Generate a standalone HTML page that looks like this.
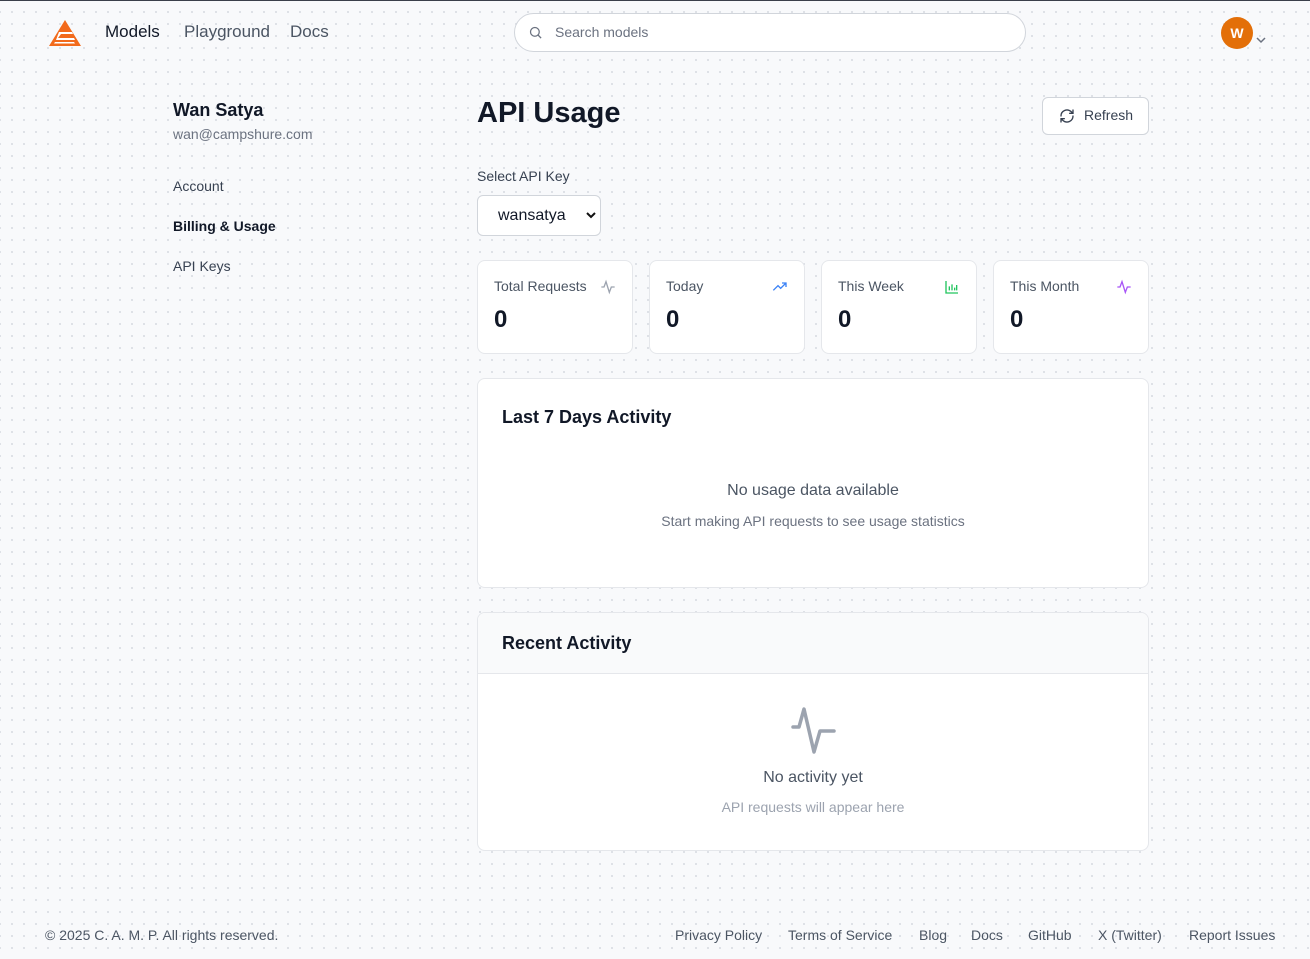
<!DOCTYPE html>
<html><head><meta charset="utf-8"><style>
*{box-sizing:border-box;margin:0;padding:0}
body{width:1310px;height:959px;overflow:hidden;font-family:"Liberation Sans",sans-serif;color:#111827;
background-color:#f8f9fb;background-image:radial-gradient(circle,#dcdfe5 1px,transparent 1.2px);background-size:12px 12px;background-position:6px 6px;position:relative}
.abs{position:absolute}
.nav a{position:absolute;top:22px;font-size:17px;color:#4b5563;text-decoration:none}
.search{left:514px;top:13px;width:512px;height:39px;border:1px solid #d1d5db;border-radius:20px;background:#fff}
.search span{position:absolute;left:40px;top:10px;font-size:14px;color:#6b7280}
.card{background:#fff;border:1px solid #e5e7eb;border-radius:8px;position:absolute}
.stat .l{position:absolute;left:16px;top:17px;font-size:14px;color:#4b5563}
.stat .v{position:absolute;left:16px;top:45px;font-size:24px;font-weight:bold;color:#111827}
.stat svg{position:absolute;right:16px;top:18px}
.side{position:absolute;left:173px;font-size:14px;color:#374151}
.foot{position:absolute;top:927px;font-size:14px;color:#4b5563}
</style></head><body>
<div class="abs" style="left:0;top:0;width:1310px;height:1px;background:#3a3f4a"></div>
<svg class="abs" style="left:47px;top:19px" width="36" height="28" viewBox="0 0 36 28"><path d="M18 1 L34 27 H2 Z" fill="#f26a1b"/><path d="M12 13 H25 L26 15 H14 L11 19 H27 L28 21 H9 Z" fill="#fff"/><path d="M8 23 H27 L28 24.5 H7 Z" fill="#fff"/></svg>
<div class="nav"><a style="left:105px;color:#111827">Models</a><a style="left:184px">Playground</a><a style="left:290px">Docs</a></div>
<div class="abs search"><svg style="position:absolute;left:13px;top:11px" width="15" height="15" viewBox="0 0 24 24" fill="none" stroke="#6b7280" stroke-width="2"><circle cx="11" cy="11" r="7"/><path d="M21 21l-5-5"/></svg><span>Search models</span></div>
<div class="abs" style="left:1221px;top:17px;width:32px;height:32px;border-radius:50%;background:#e36f08;color:#fff;font-size:14px;font-weight:bold;text-align:center;line-height:32px">W</div>
<svg class="abs" style="left:1256px;top:36px" width="10" height="8" viewBox="0 0 10 8"><path d="M1 2l4 4 4-4" fill="none" stroke="#6b7280" stroke-width="1.5"/></svg>

<div class="side" style="top:100px;font-size:18px;font-weight:bold;color:#111827">Wan Satya</div>
<div class="side" style="top:126px;color:#6b7280">wan@campshure.com</div>
<div class="side" style="top:178px">Account</div>
<div class="side" style="top:218px;font-weight:bold;color:#111827">Billing &amp; Usage</div>
<div class="side" style="top:258px">API Keys</div>

<div class="abs" style="left:477px;top:97px;font-size:29px;font-weight:bold">API Usage</div>
<div class="abs" style="left:1042px;top:97px;width:107px;height:38px;border:1px solid #d1d5db;border-radius:6px;background:#fff">
<svg style="position:absolute;left:16px;top:10px" width="16" height="16" viewBox="0 0 24 24" fill="none" stroke="#374151" stroke-width="2" stroke-linecap="round"><path d="M3 12a9 9 0 0 1 15-6.7L21 8M21 3v5h-5M21 12a9 9 0 0 1-15 6.7L3 16M3 21v-5h5"/></svg>
<span style="position:absolute;left:41px;top:9px;font-size:14px;color:#374151">Refresh</span></div>
<div class="abs" style="left:477px;top:168px;font-size:14px;color:#374151">Select API Key</div>
<div class="abs" style="left:477px;top:195px;width:124px;height:41px;border:1px solid #d1d5db;border-radius:6px;background:#fff;font-size:16px;padding:11px 0 0 20px">wansatya<svg style="position:absolute;right:4px;top:16px" width="10" height="8" viewBox="0 0 10 8"><path d="M1 1l4 4 4-4" fill="none" stroke="#111" stroke-width="2"/></svg></div>

<div class="card stat" style="left:477px;top:260px;width:156px;height:94px"><div class="l">Total Requests</div><div class="v">0</div><svg width="16" height="16" viewBox="0 0 24 24" fill="none" stroke="#9ca3af" stroke-width="2"><path d="M2 12h4l3-8 5 16 3-8h5"/></svg></div>
<div class="card stat" style="left:649px;top:260px;width:156px;height:94px"><div class="l">Today</div><div class="v">0</div><svg width="16" height="16" viewBox="0 0 24 24" fill="none" stroke="#3b82f6" stroke-width="2"><path d="M2 17l7-7 4 4 8-8M15 6h6v6"/></svg></div>
<div class="card stat" style="left:821px;top:260px;width:156px;height:94px"><div class="l">This Week</div><div class="v">0</div><svg width="16" height="16" viewBox="0 0 24 24" fill="none" stroke="#22c55e" stroke-width="2"><path d="M3 3v18h18M8 17v-6M12 17V8M16 17v-4M19 17V9"/></svg></div>
<div class="card stat" style="left:993px;top:260px;width:156px;height:94px"><div class="l">This Month</div><div class="v">0</div><svg width="16" height="16" viewBox="0 0 24 24" fill="none" stroke="#a855f7" stroke-width="2"><path d="M2 12h4l3-8 5 16 3-8h5"/></svg></div>

<div class="card" style="left:477px;top:378px;width:672px;height:210px">
<div style="position:absolute;left:24px;top:28px;font-size:18px;font-weight:bold">Last 7 Days Activity</div>
<div style="position:absolute;left:0;right:0;top:103px;text-align:center;font-size:16px;color:#4b5563">No usage data available</div>
<div style="position:absolute;left:0;right:0;top:134px;text-align:center;font-size:14px;color:#6b7280">Start making API requests to see usage statistics</div></div>

<div class="card" style="left:477px;top:612px;width:672px;height:239px;overflow:hidden">
<div style="height:61px;background:#f9fafb;border-bottom:1px solid #e5e7eb"><div style="position:absolute;left:24px;top:20px;font-size:18px;font-weight:bold">Recent Activity</div></div>
<svg style="position:absolute;left:313px;top:93px" width="46" height="50" viewBox="0 0 46 50" fill="none" stroke="#9ca3af" stroke-width="3.5" stroke-linecap="round" stroke-linejoin="round"><path d="M2 21h6l5-18 10 43 6-21h14"/></svg>
<div style="position:absolute;left:0;right:0;top:156px;text-align:center;font-size:16px;color:#4b5563">No activity yet</div>
<div style="position:absolute;left:0;right:0;top:186px;text-align:center;font-size:14px;color:#9ca3af">API requests will appear here</div></div>

<div class="foot" style="left:45px">© 2025 C. A. M. P. All rights reserved.</div>
<div class="foot" style="left:675px">Privacy Policy</div>
<div class="foot" style="left:788px">Terms of Service</div>
<div class="foot" style="left:919px">Blog</div>
<div class="foot" style="left:971px">Docs</div>
<div class="foot" style="left:1028px">GitHub</div>
<div class="foot" style="left:1098px">X (Twitter)</div>
<div class="foot" style="left:1189px">Report Issues</div>
</body></html>
